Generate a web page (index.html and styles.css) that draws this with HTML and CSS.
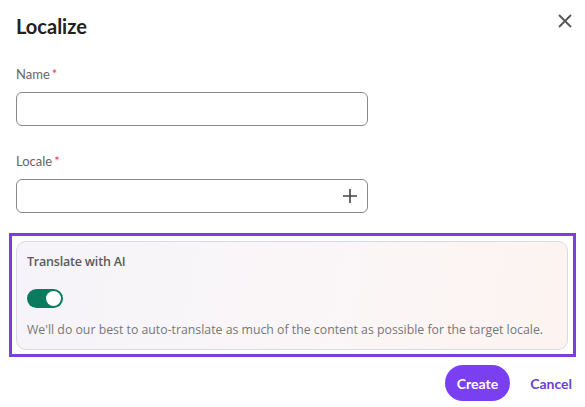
FILE: index.html
```html
<!DOCTYPE html>
<html lang="en">
<head>
  <meta charset="UTF-8" />
  <meta name="viewport" content="width=device-width, initial-scale=1.0" />
  <title>Localize</title>
  <link rel="stylesheet" href="styles.css">
</head>
<body>
  <div class="dialog">
    <header class="dialog-head">
      <h1>Localize</h1>
      <button class="close" aria-label="Close">
        <svg width="16" height="16" viewBox="0 0 16 16"><path d="M2 2 L14 14 M14 2 L2 14" stroke="#555" stroke-width="1.8" fill="none"/></svg>
      </button>
    </header>

    <div class="field">
      <label>Name<span class="req">*</span></label>
      <div class="input"></div>
    </div>

    <div class="field">
      <label>Locale<span class="req">*</span></label>
      <div class="input">
        <svg class="plus" width="14" height="14" viewBox="0 0 14 14"><path d="M7 0 V14 M0 7 H14" stroke="#444" stroke-width="1.6" fill="none"/></svg>
      </div>
    </div>

    <div class="highlight">
      <div class="ai-card">
        <div class="ai-title">Translate with AI</div>
        <div class="toggle"><span class="knob"></span></div>
        <p class="ai-desc">We'll do our best to auto-translate as much of the content as possible for the target locale.</p>
      </div>
    </div>

    <footer class="actions">
      <button class="btn-create">Create</button>
      <button class="btn-cancel">Cancel</button>
    </footer>
  </div>
</body>
</html>
```

FILE: styles.css
```css
* { margin: 0; padding: 0; box-sizing: border-box; }
body { font-family: Lato, "Liberation Sans", sans-serif; background: #fff; color: #222; }
button { font-family: inherit; border: none; background: none; cursor: pointer; }

.dialog { width: 585px; padding: 13px 9px 0 16px; }
.dialog-head { display: flex; justify-content: space-between; align-items: flex-start; margin-bottom: 27px; }
.dialog-head h1 { font-size: 20px; font-weight: 700; color: #222; line-height: 26px; }
.close { margin-right: 3px; padding: 0; width: 16px; height: 16px; }

.field { margin-bottom: 27px; }
.field label { display: block; font-size: 13px; color: #666; line-height: 16px; margin-bottom: 10px; }
.req { color: #e0445e; margin-left: 2px; }
.input { width: 352px; height: 34px; border: 1px solid #8a8a8a; border-radius: 6px; display: flex; align-items: center; justify-content: flex-end; padding-right: 10px; }

.highlight { margin: -7px 0 0 -7px; width: 567px; border: 3px solid #7b3fe0; padding: 5px 5px 4px 4px; }
.ai-card { border: 1px solid #dcd8e6; border-radius: 10px; padding: 11px 10px 11px 10px; background: linear-gradient(100deg, #f6f4f9 0%, #faf6f8 50%, #fdf4f1 100%); font-family: "Open Sans", "Noto Sans", sans-serif; }
.ai-title { font-size: 12.5px; font-weight: 600; color: #5a5a5a; line-height: 17px; letter-spacing: -0.2px; }
.toggle { margin-top: 19px; width: 36px; height: 19px; border-radius: 10px; background: #0c7a5e; display: flex; justify-content: flex-end; align-items: center; padding-right: 2px; }
.knob { width: 15px; height: 15px; border-radius: 50%; background: #fff; }
.ai-desc { margin-top: 13px; font-size: 12.3px; color: #777; line-height: 17px; }

.actions { display: flex; justify-content: flex-end; align-items: center; gap: 20px; margin-top: 8px; padding-right: 4px; }
.btn-create { background: #7b3ff2; color: #fff; font-size: 14px; font-weight: 700; height: 36px; padding: 0 12px; border-radius: 18px; }
.btn-cancel { color: #6a3fd8; font-size: 14px; font-weight: 700; }
```
